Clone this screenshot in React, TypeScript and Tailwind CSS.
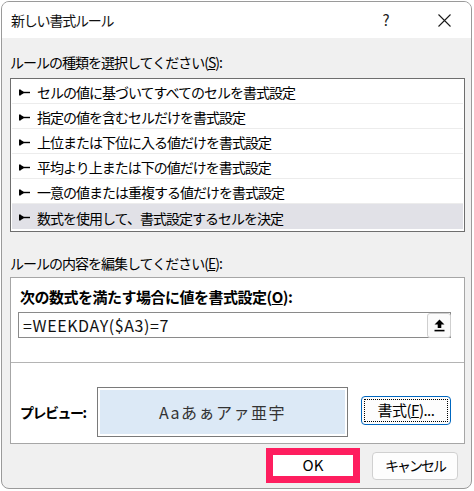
import React from 'react';

const jp = { fontFamily: '"Noto Sans CJK JP", "Noto Sans", sans-serif' };

const rules = [
    'セルの値に基づいてすべてのセルを書式設定',
    '指定の値を含むセルだけを書式設定',
    '上位または下位に入る値だけを書式設定',
    '平均より上または下の値だけを書式設定',
    '一意の値または重複する値だけを書式設定',
    '数式を使用して、書式設定するセルを決定',
];

const RuleMarker = () => (
    <svg width="11" height="7" viewBox="0 0 11 7" className="shrink-0">
        <rect x="0" y="0.5" width="1.4" height="6" fill="#000" />
        <polygon points="1,0.5 6,3.5 1,6.5" fill="#000" />
        <rect x="5" y="2.8" width="6" height="1.4" fill="#000" />
    </svg>
);

const UploadIcon = () => (
    <svg width="11" height="13" viewBox="0 0 11 13">
        <polygon points="5.5,0.5 10.5,5.5 7.3,5.5 7.3,9 3.7,9 3.7,5.5 0.5,5.5" fill="#000" />
        <rect x="0.5" y="10.8" width="10" height="1.6" fill="#000" />
    </svg>
);

const CloseIcon = () => (
    <svg width="13" height="13" viewBox="0 0 13 13">
        <path d="M0.5 0.5 L12.5 12.5 M12.5 0.5 L0.5 12.5" stroke="#1a1a1a" strokeWidth="1.1" fill="none" />
    </svg>
);

export default function App() {
    return (
        <div className="w-[474px] h-[491px] bg-white overflow-hidden" style={jp}>
            <div className="ml-[1px] mt-[1px] w-[471px] h-[488px] border border-[#9a9a9a] rounded-[8px] overflow-hidden bg-[#f0f0f0] flex flex-col text-black">
                {/* title bar */}
                <div className="h-[36px] bg-white flex items-center pl-[9px] pr-[4px] shrink-0">
                    <span className="flex-1 text-[14px] tracking-[-1.2px] text-[#111]">新しい書式ルール</span>
                    <span className="w-[46px] text-center text-[15px] text-[#222]">?</span>
                    <span className="w-[46px] ml-[12px] flex justify-center">
                        <CloseIcon />
                    </span>
                </div>

                <div className="pl-[8px] pr-[6px] flex flex-col">
                    <div className="mt-[14px] h-[20px] leading-[20px] text-[14px] tracking-[-1px]">
                        ルールの種類を選択してください(<span className="underline">S</span>):
                    </div>

                    <div className="mt-[6px] w-[455px] h-[154px] border border-[#6e6e6e] bg-white flex flex-col">
                        {rules.map((r, i) => (
                            <div
                                key={r}
                                className={
                                    i === rules.length - 1
                                        ? 'h-[25px] mx-[1px] flex items-center gap-[7px] pl-[7px] pt-[2px] bg-[#e1e1e7]'
                                        : 'h-[25px] mx-[1px] flex items-center gap-[7px] pl-[7px] pt-[2px] border-b border-[#ececec]'
                                }
                            >
                                <RuleMarker />
                                <span className="text-[14px] tracking-[-1px] leading-none">{r}</span>
                            </div>
                        ))}
                    </div>

                    <div className="mt-[21px] h-[20px] leading-[20px] text-[14px] tracking-[-1px]">
                        ルールの内容を編集してください(<span className="underline">E</span>):
                    </div>

                    <div className="mt-[4px] w-[455px] h-[167px] border border-[#a6a6a6] bg-white flex flex-col">
                        <div className="mt-[9px] ml-[9px] h-[20px] leading-[20px] text-[15px] font-bold tracking-[-0.5px]">
                            次の数式を満たす場合に値を書式設定(<span className="underline">O</span>):
                        </div>
                        <div className="mt-[5px] ml-[7px] w-[433px] h-[26px] border border-[#8a8a8a] flex items-center">
                            <span className="flex-1 pl-[4px] text-[16px] tracking-[0.6px] text-[#111]">=WEEKDAY($A3)=7</span>
                            <span className="w-[24px] h-[25px] border border-[#cfcfcf] rounded-[3px] bg-[#fbfbfb] flex items-center justify-center -mr-[1px]">
                                <UploadIcon />
                            </span>
                        </div>
                        <div className="mt-[24px] border-t border-[#b4b4b4]" />
                        <div className="mt-[24px] h-[50px] flex items-center pl-[9px]">
                            <span className="w-[77px] text-[14px] font-bold tracking-[-1.5px]">プレビュー:</span>
                            <div className="w-[251px] h-[50px] border border-[#7a7a7a] p-[2px]">
                                <div className="w-full h-full bg-[#dce9f6] flex items-center justify-center text-[16px] tracking-[1.5px] text-[#333]">
                                    Aaあぁアァ亜宇
                                </div>
                            </div>
                            <button className="ml-[13px] w-[90px] h-[29px] rounded-[4px] border border-[#0067c0] bg-[#fdfdfd] p-[2px] mt-[-4px]">
                                <span className="w-full h-full border border-dotted border-black flex items-center justify-center text-[15px] tracking-[-0.5px]">
                                    書式(<span className="underline">F</span>)...
                                </span>
                            </button>
                        </div>
                    </div>

                    <div className="mt-[4px] flex justify-end items-center">
                        <div className="w-[94px] h-[35px] border-[7px] border-[#fe1e5f] bg-white flex items-center justify-center text-[15px]">
                            OK
                        </div>
                        <button className="ml-[12px] mr-[7px] w-[86px] h-[28px] rounded-[4px] border border-[#d0d0d0] bg-[#fdfdfd] text-[14px] tracking-[-2px] flex items-center justify-center">
                            キャンセル
                        </button>
                    </div>
                </div>
            </div>
        </div>
    );
}
